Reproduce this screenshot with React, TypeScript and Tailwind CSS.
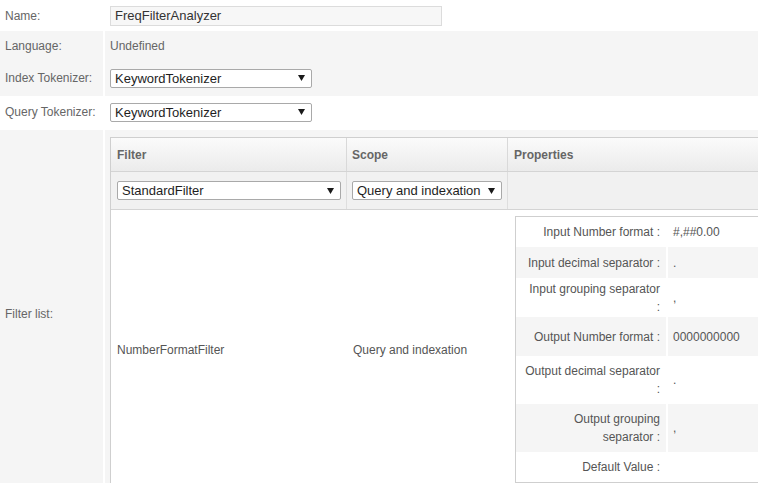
import React from "react";

function Arrow() {
  return (
    <svg width="7" height="6" viewBox="0 0 7 6" className="shrink-0">
      <path d="M0 0 L7 0 L3.5 6 Z" fill="#1a1a1a" />
    </svg>
  );
}

function Select({ className, text }: { className: string; text: string }) {
  return (
    <div
      className={
        "flex items-center justify-between border border-[#a9a9a9] rounded-[2px] bg-white pl-[4px] pr-[6px] text-[13px] text-[#1e1e1e] leading-none " +
        className
      }
    >
      <span>{text}</span>
      <Arrow />
    </div>
  );
}

const props: { label: string; value: string; h: string; gray: boolean }[] = [
  { label: "Input Number format :", value: "#,##0.00", h: "h-[30px]", gray: false },
  { label: "Input decimal separator :", value: ".", h: "h-[31px]", gray: true },
  { label: "Input grouping separator :", value: ",", h: "h-[39px]", gray: false },
  { label: "Output Number format :", value: "0000000000", h: "h-[39px]", gray: true },
  { label: "Output decimal separator :", value: ".", h: "h-[48px]", gray: false },
  { label: "Output grouping separator :", value: ",", h: "h-[48px]", gray: true },
  { label: "Default Value :", value: "", h: "h-[30px]", gray: false },
];

export default function App() {
  return (
    <div className="w-[758px] h-[483px] overflow-hidden bg-white font-['Liberation_Sans',Arial,sans-serif] text-[12px] text-[#666]">
      {/* Name */}
      <div className="flex h-[31px]">
        <div className="w-[105px] shrink-0 pl-[5px] flex items-center">Name:</div>
        <div className="flex items-center pl-[5px]">
          <div className="w-[332px] h-[20px] border border-[#dcdcdc] bg-[#f7f7f7] pl-[4px] text-[13px] text-[#333] flex items-center">
            FreqFilterAnalyzer
          </div>
        </div>
      </div>
      {/* Language */}
      <div className="flex h-[29px]">
        <div className="w-[105px] shrink-0 border-r-2 border-white bg-[#f5f5f5] pl-[5px] flex items-center">
          Language:
        </div>
        <div className="flex-1 bg-[#f5f5f5] pl-[5px] flex items-center">Undefined</div>
      </div>
      {/* Index Tokenizer */}
      <div className="flex h-[36px]">
        <div className="w-[105px] shrink-0 border-r-2 border-white bg-[#f5f5f5] pl-[5px] flex items-center">
          Index Tokenizer:
        </div>
        <div className="flex-1 bg-[#f5f5f5] pl-[5px] flex items-center">
          <Select className="w-[202px] h-[19px]" text="KeywordTokenizer" />
        </div>
      </div>
      {/* Query Tokenizer */}
      <div className="flex h-[32px]">
        <div className="w-[105px] shrink-0 pl-[5px] flex items-center">Query Tokenizer:</div>
        <div className="flex-1 pl-[5px] flex items-center">
          <Select className="w-[202px] h-[19px]" text="KeywordTokenizer" />
        </div>
      </div>
      <div className="h-[2px]" />
      {/* Filter list */}
      <div className="flex">
        <div className="w-[105px] shrink-0 border-r-2 border-white bg-[#f5f5f5] pl-[5px] flex items-center">
          Filter list:
        </div>
        <div className="flex-1 bg-[#f5f5f5] pl-[5px] pt-[7px] pb-[7px]">
          <div className="w-[760px] border border-[#cfcfcf] bg-white">
            {/* header */}
            <div className="flex h-[34px] bg-gradient-to-b from-[#fbfbfb] to-[#ebebeb] border-b border-[#d4d4d4] font-bold text-[#666]">
              <div className="w-[236px] shrink-0 border-r border-[#d9d9d9] pl-[6px] flex items-center">Filter</div>
              <div className="w-[161px] shrink-0 border-r border-[#d9d9d9] pl-[5px] flex items-center">Scope</div>
              <div className="flex-1 pl-[6px] flex items-center">Properties</div>
            </div>
            {/* selects */}
            <div className="flex h-[38px] bg-[#f1f1f1] border-b border-[#d4d4d4]">
              <div className="w-[236px] shrink-0 border-r border-[#dedede] pl-[6px] flex items-center">
                <Select className="w-[224px] h-[19px]" text="StandardFilter" />
              </div>
              <div className="w-[161px] shrink-0 border-r border-[#dedede] pl-[5px] flex items-center">
                <Select className="w-[150px] h-[19px]" text="Query and indexation" />
              </div>
              <div className="flex-1" />
            </div>
            {/* data */}
            <div className="flex text-[#555]">
              <div className="w-[237px] shrink-0 pl-[6px] flex items-center">NumberFormatFilter</div>
              <div className="w-[161px] shrink-0 pl-[5px] flex items-center">Query and indexation</div>
              <div className="flex-1 pl-[6px] pt-[6px] pb-[7px]">
                <div className="w-[300px] border border-[#cfcfcf]">
                  {props.map((p) => (
                    <div
                      key={p.label}
                      className={"flex " + p.h + " " + (p.gray ? "bg-[#f5f5f5]" : "bg-white")}
                    >
                      <div className="w-[150px] shrink-0 pl-[8px] pr-[6px] text-right leading-[18px] flex items-center justify-end">
                        <span>{p.label}</span>
                      </div>
                      <div className="flex-1 border-l-2 border-white pl-[5px] flex items-center">{p.value}</div>
                    </div>
                  ))}
                </div>
              </div>
            </div>
          </div>
        </div>
      </div>
    </div>
  );
}
